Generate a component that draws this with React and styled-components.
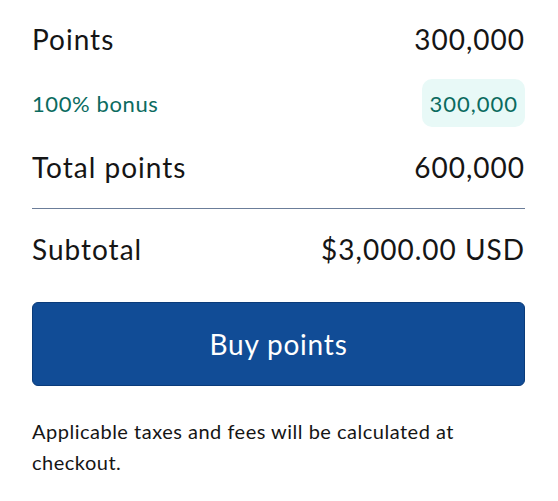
import React from "react";
import styled, { createGlobalStyle } from "styled-components";

const GlobalStyle = createGlobalStyle`
  html, body {
    margin: 0;
    padding: 0;
    background: #fff;
  }
  body {
    font-family: Lato, "Open Sans", "Liberation Sans", sans-serif;
    color: #151515;
  }
`;

const Summary = styled.div`
  padding: 20px 33px 0 32px;
`;

const Rows = styled.div`
  display: flex;
  flex-direction: column;
  gap: 21px;
`;

const Row = styled.div`
  display: flex;
  justify-content: space-between;
  align-items: center;
  min-height: 38px;
  font-size: ${(p) => (p.small ? "22px" : "28px")};
  letter-spacing: ${(p) => (p.small ? "0.6px" : "1px")};
  color: ${(p) => (p.bonus ? "#0b6b5f" : "#151515")};
`;

const Badge = styled.span`
  display: inline-flex;
  align-items: center;
  height: 48px;
  padding: 0 7px;
  border-radius: 10px;
  background: #e8f9f7;
  color: #0b6b5f;
  letter-spacing: 1px;
`;

const Divider = styled.hr`
  margin: 22px 0 0;
  border: none;
  border-top: 1px solid #6b7d99;
`;

const SubtotalRow = styled(Row)`
  margin-top: 21px;
`;

const BuyButton = styled.button`
  display: block;
  width: 100%;
  height: 84px;
  margin-top: 34px;
  border: 1px solid #0a3b7a;
  border-radius: 6px;
  background: #114c96;
  color: #fff;
  font-family: inherit;
  font-size: 28px;
  letter-spacing: 0.8px;
  cursor: pointer;
`;

const Note = styled.p`
  margin: 30px 0 0;
  font-size: 20px;
  line-height: 31px;
  letter-spacing: 0.5px;
  color: #151515;
`;

export default function App() {
  return (
    <>
      <GlobalStyle />
      <Summary>
        <Rows>
          <Row>
            <span>Points</span>
            <span>300,000</span>
          </Row>
          <Row small bonus>
            <span>100% bonus</span>
            <Badge>300,000</Badge>
          </Row>
          <Row>
            <span>Total points</span>
            <span>600,000</span>
          </Row>
        </Rows>
        <Divider />
        <SubtotalRow>
          <span>Subtotal</span>
          <span>$3,000.00 USD</span>
        </SubtotalRow>
        <BuyButton>Buy points</BuyButton>
        <Note>Applicable taxes and fees will be calculated at checkout.</Note>
      </Summary>
    </>
  );
}
